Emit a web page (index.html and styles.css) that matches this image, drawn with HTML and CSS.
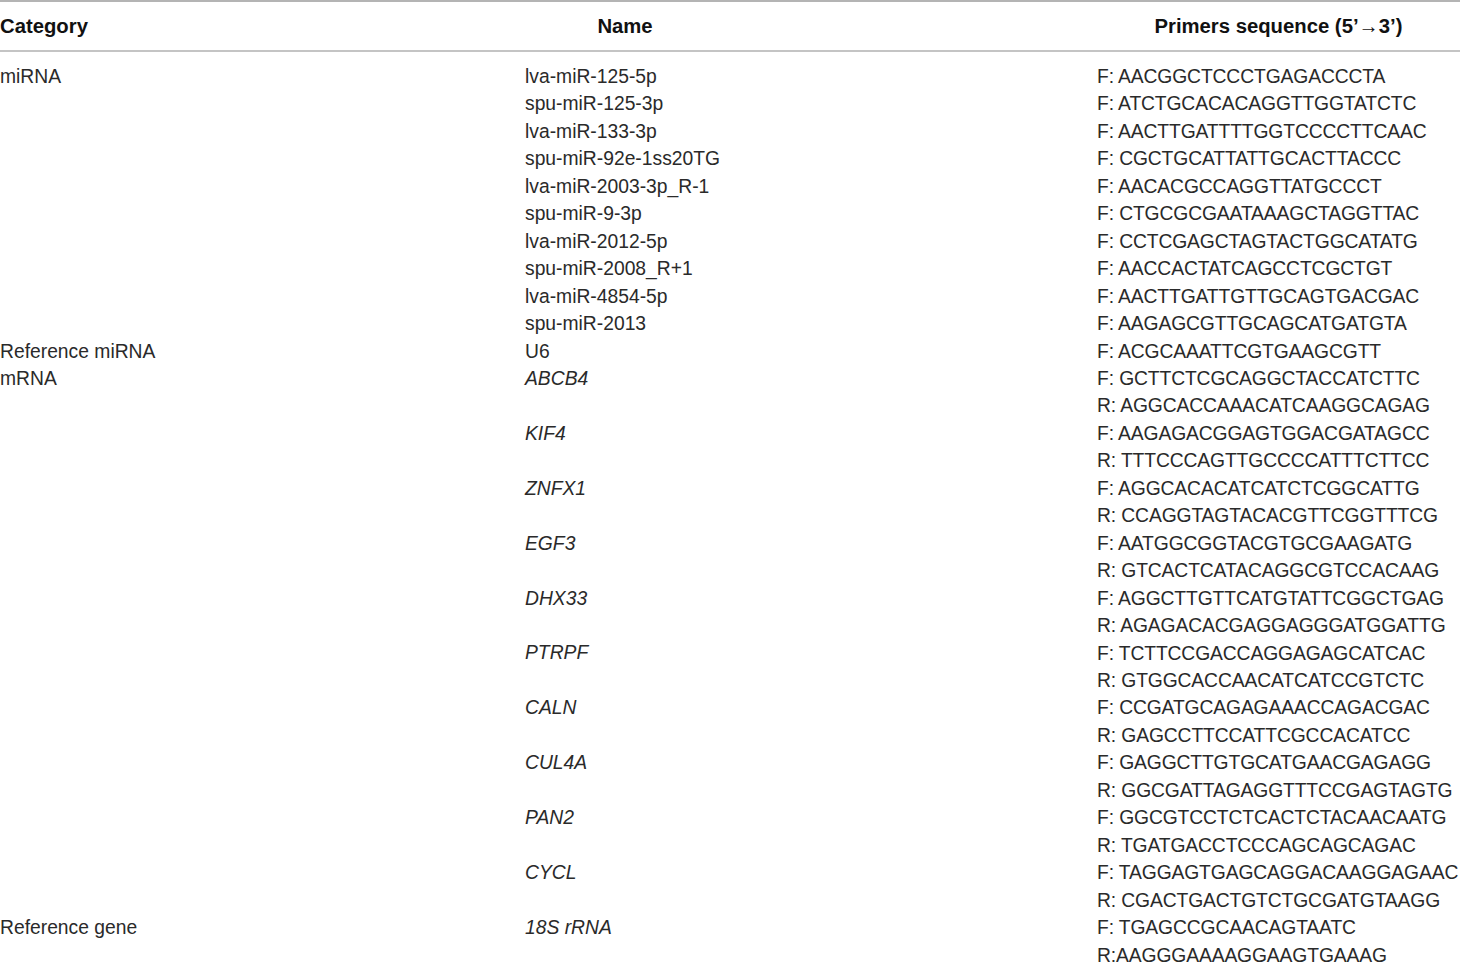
FILE: index.html
```html
<!DOCTYPE html>
<html>
<head>
<meta charset="utf-8">
<link rel="stylesheet" href="styles.css">
</head>
<body>
<div class="table">
  <div class="head">
    <div class="h-cat">Category</div>
    <div class="h-name">Name</div>
    <div class="h-gap"></div>
    <div class="h-seq">Primers sequence (5’→3’)</div>
  </div>
  <div class="body">
    <div class="cat">miRNA</div>
    <div class="names">
      <div>lva-miR-125-5p</div>
      <div>spu-miR-125-3p</div>
      <div>lva-miR-133-3p</div>
      <div>spu-miR-92e-1ss20TG</div>
      <div>lva-miR-2003-3p_R-1</div>
      <div>spu-miR-9-3p</div>
      <div>lva-miR-2012-5p</div>
      <div>spu-miR-2008_R+1</div>
      <div>lva-miR-4854-5p</div>
      <div>spu-miR-2013</div>
    </div>
    <div></div>
    <div class="seqs">
      <div>F: AACGGCTCCCTGAGACCCTA</div>
      <div>F: ATCTGCACACAGGTTGGTATCTC</div>
      <div>F: AACTTGATTTTGGTCCCCTTCAAC</div>
      <div>F: CGCTGCATTATTGCACTTACCC</div>
      <div>F: AACACGCCAGGTTATGCCCT</div>
      <div>F: CTGCGCGAATAAAGCTAGGTTAC</div>
      <div>F: CCTCGAGCTAGTACTGGCATATG</div>
      <div>F: AACCACTATCAGCCTCGCTGT</div>
      <div>F: AACTTGATTGTTGCAGTGACGAC</div>
      <div>F: AAGAGCGTTGCAGCATGATGTA</div>
    </div>

    <div class="cat">Reference miRNA</div>
    <div class="names"><div>U6</div></div>
    <div></div>
    <div class="seqs"><div>F: ACGCAAATTCGTGAAGCGTT</div></div>

    <div class="cat">mRNA</div>
    <div class="names it">
      <div class="pair">ABCB4</div>
      <div class="pair">KIF4</div>
      <div class="pair">ZNFX1</div>
      <div class="pair">EGF3</div>
      <div class="pair">DHX33</div>
      <div class="pair">PTRPF</div>
      <div class="pair">CALN</div>
      <div class="pair">CUL4A</div>
      <div class="pair">PAN2</div>
      <div class="pair">CYCL</div>
    </div>
    <div></div>
    <div class="seqs">
      <div>F: GCTTCTCGCAGGCTACCATCTTC</div>
      <div>R: AGGCACCAAACATCAAGGCAGAG</div>
      <div>F: AAGAGACGGAGTGGACGATAGCC</div>
      <div>R: TTTCCCAGTTGCCCCATTTCTTCC</div>
      <div>F: AGGCACACATCATCTCGGCATTG</div>
      <div>R: CCAGGTAGTACACGTTCGGTTTCG</div>
      <div>F: AATGGCGGTACGTGCGAAGATG</div>
      <div>R: GTCACTCATACAGGCGTCCACAAG</div>
      <div>F: AGGCTTGTTCATGTATTCGGCTGAG</div>
      <div>R: AGAGACACGAGGAGGGATGGATTG</div>
      <div>F: TCTTCCGACCAGGAGAGCATCAC</div>
      <div>R: GTGGCACCAACATCATCCGTCTC</div>
      <div>F: CCGATGCAGAGAAACCAGACGAC</div>
      <div>R: GAGCCTTCCATTCGCCACATCC</div>
      <div>F: GAGGCTTGTGCATGAACGAGAGG</div>
      <div>R: GGCGATTAGAGGTTTCCGAGTAGTG</div>
      <div>F: GGCGTCCTCTCACTCTACAACAATG</div>
      <div>R: TGATGACCTCCCAGCAGCAGAC</div>
      <div>F: TAGGAGTGAGCAGGACAAGGAGAAC</div>
      <div>R: CGACTGACTGTCTGCGATGTAAGG</div>
    </div>

    <div class="cat">Reference gene</div>
    <div class="names it"><div class="pair">18S rRNA</div></div>
    <div></div>
    <div class="seqs">
      <div>F: TGAGCCGCAACAGTAATC</div>
      <div>R:AAGGGAAAAGGAAGTGAAAG</div>
    </div>
  </div>
</div>
</body>
</html>
```
FILE: styles.css
```css
html, body {
  margin: 0;
  padding: 0;
  background: #ffffff;
}
body {
  font-family: "Liberation Sans", Arial, sans-serif;
  font-size: 19.3px;
  color: #2a2a2a;
}
.table {
  width: 1460px;
}
.head {
  display: grid;
  grid-template-columns: 525px 200px 372px 363px;
  border-top: 2px solid #b4b4b4;
  border-bottom: 2px solid #c4c4c4;
  height: 48px;
  align-items: center;
  font-weight: bold;
  font-size: 20.3px;
  color: #111;
}
.h-name, .h-seq {
  text-align: center;
  white-space: nowrap;
}
.body {
  display: grid;
  grid-template-columns: 525px 200px 372px 363px;
  padding-top: 11px;
  line-height: 27.45px;
}
.seqs, .names, .cat {
  white-space: nowrap;
}
.seqs {
  letter-spacing: -0.12px;
}
.it {
  font-style: italic;
}
.pair {
  height: 54.9px;
}
```
